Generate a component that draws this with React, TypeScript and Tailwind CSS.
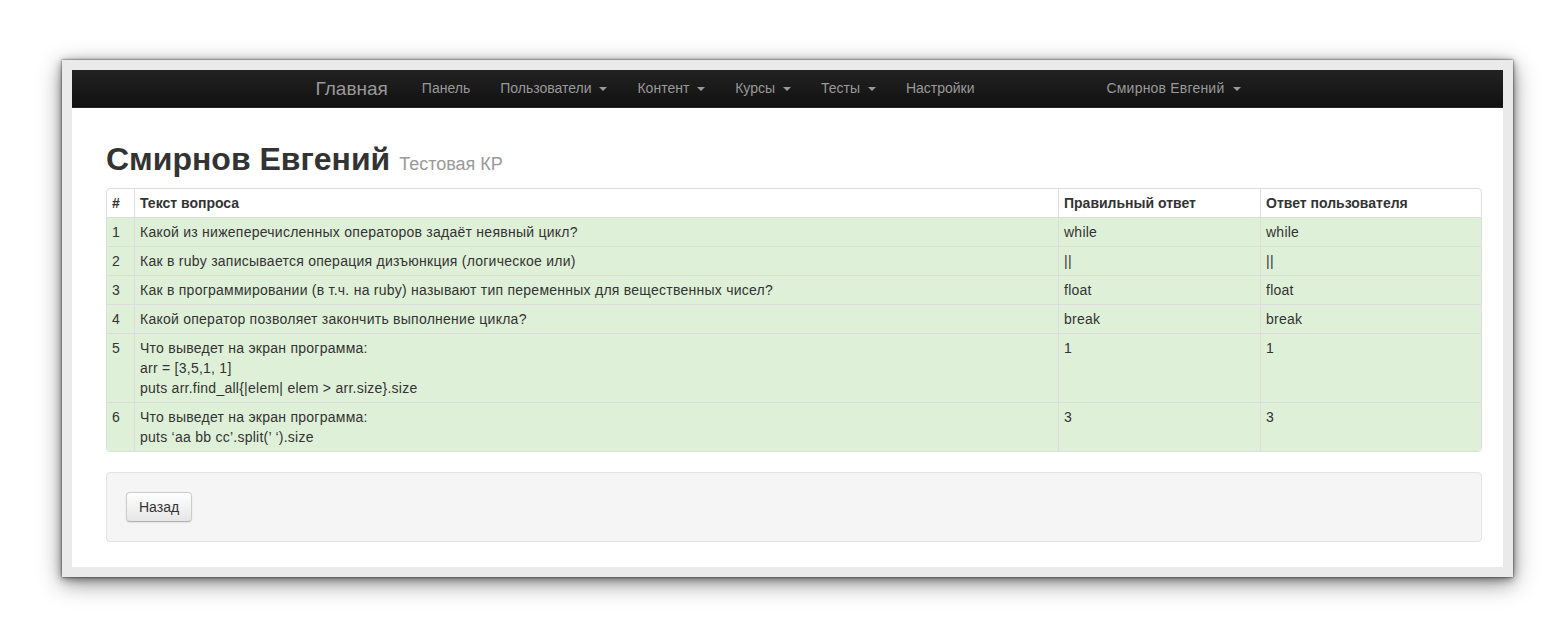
import React from "react";

const Caret = () => (
  <span className="ml-[4px] inline-block h-0 w-0 border-l-[4px] border-r-[4px] border-t-[4px] border-l-transparent border-r-transparent border-t-[#999] align-middle" />
);

type Row = { n: number; q: string[]; a: string; u: string };

const rows: Row[] = [
  { n: 1, q: ["Какой из нижеперечисленных операторов задаёт неявный цикл?"], a: "while", u: "while" },
  { n: 2, q: ["Как в ruby записывается операция дизъюнкция (логическое или)"], a: "||", u: "||" },
  { n: 3, q: ["Как в программировании (в т.ч. на ruby) называют тип переменных для вещественных чисел?"], a: "float", u: "float" },
  { n: 4, q: ["Какой оператор позволяет закончить выполнение цикла?"], a: "break", u: "break" },
  {
    n: 5,
    q: ["Что выведет на экран программа:", "arr = [3,5,1, 1]", "puts arr.find_all{|elem| elem > arr.size}.size"],
    a: "1",
    u: "1",
  },
  { n: 6, q: ["Что выведет на экран программа:", "puts \u2018aa bb cc\u2019.split(\u2019 \u2018).size"], a: "3", u: "3" },
];

export default function App() {
  return (
    <div
      className="min-h-screen bg-white pl-[62px] pt-[60px]"
      style={{ fontFamily: '"Liberation Sans", Arial, Helvetica, sans-serif' }}
    >
      <div className="h-[517px] w-[1451px] bg-[#eaeaea] p-[10px] shadow-[0_0_2px_rgba(0,0,0,0.7),0_2px_8px_rgba(0,0,0,0.45),0_6px_22px_rgba(0,0,0,0.45)]">
        <div className="h-full bg-white">
          <nav className="h-[38px] border-b border-[#252525] bg-gradient-to-b from-[#222222] to-[#111111]">
            <div className="mx-auto flex h-full w-[940px] items-center text-[14px] text-[#999999]">
              <span className="-ml-[2px] pr-[19px] text-[19px] font-light leading-[20px]">Главная</span>
              <span className="px-[15px]">Панель</span>
              <span className="px-[15px]">
                Пользователи <Caret />
              </span>
              <span className="px-[15px]">
                Контент <Caret />
              </span>
              <span className="px-[15px]">
                Курсы <Caret />
              </span>
              <span className="px-[15px]">
                Тесты <Caret />
              </span>
              <span className="px-[15px]">Настройки</span>
              <span className="ml-auto pl-[15px] pr-[17px] tracking-[0.2px]">
                Смирнов Евгений <Caret />
              </span>
            </div>
          </nav>

          <div className="pl-[34px] pr-[21px]">
            <h1 className="mb-[9px] mt-[31px] text-[32px] font-bold leading-[40px] text-[#333333]">
              Смирнов Евгений{" "}
              <small className="text-[18px] font-normal leading-[20px] text-[#999999]">Тестовая КР</small>
            </h1>

            <table className="w-full table-fixed border-separate border-spacing-0 rounded-[4px] border border-[#dddddd] text-[14px] leading-[20px] text-[#333333]">
              <colgroup>
                <col className="w-[27px]" />
                <col />
                <col className="w-[202px]" />
                <col className="w-[221px]" />
              </colgroup>
              <thead>
                <tr>
                  <th className="px-[5px] py-[4px] text-left align-top font-bold">#</th>
                  <th className="border-l border-[#dddddd] px-[5px] py-[4px] text-left align-top font-bold">
                    Текст вопроса
                  </th>
                  <th className="border-l border-[#dddddd] px-[5px] py-[4px] text-left align-top font-bold">
                    Правильный ответ
                  </th>
                  <th className="border-l border-[#dddddd] px-[5px] py-[4px] text-left align-top font-bold">
                    Ответ пользователя
                  </th>
                </tr>
              </thead>
              <tbody className="tracking-[0.25px]">
                {rows.map((r, i) => (
                  <tr key={r.n}>
                    <td
                      className={
                        "border-t border-[#dddddd] bg-[#dff0d8] px-[5px] py-[4px] align-top " +
                        (i === rows.length - 1 ? "rounded-bl-[4px]" : "")
                      }
                    >
                      {r.n}
                    </td>
                    <td className="border-l border-t border-[#dddddd] bg-[#dff0d8] px-[5px] py-[4px] align-top">
                      {r.q.map((line, k) => (
                        <div key={k}>{line}</div>
                      ))}
                    </td>
                    <td className="border-l border-t border-[#dddddd] bg-[#dff0d8] px-[5px] py-[4px] align-top">
                      {r.a}
                    </td>
                    <td
                      className={
                        "border-l border-t border-[#dddddd] bg-[#dff0d8] px-[5px] py-[4px] align-top " +
                        (i === rows.length - 1 ? "rounded-br-[4px]" : "")
                      }
                    >
                      {r.u}
                    </td>
                  </tr>
                ))}
              </tbody>
            </table>

            <div className="mt-[20px] rounded-[4px] border border-[#e3e3e3] bg-[#f5f5f5] p-[19px]">
              <button className="rounded-[4px] border border-[#cccccc] border-b-[#b3b3b3] bg-gradient-to-b from-white to-[#e6e6e6] px-[12px] py-[4px] text-[14px] leading-[20px] text-[#333333] shadow-[inset_0_1px_0_rgba(255,255,255,0.2),0_1px_2px_rgba(0,0,0,0.08)]">
                Назад
              </button>
            </div>
          </div>
        </div>
      </div>
    </div>
  );
}
